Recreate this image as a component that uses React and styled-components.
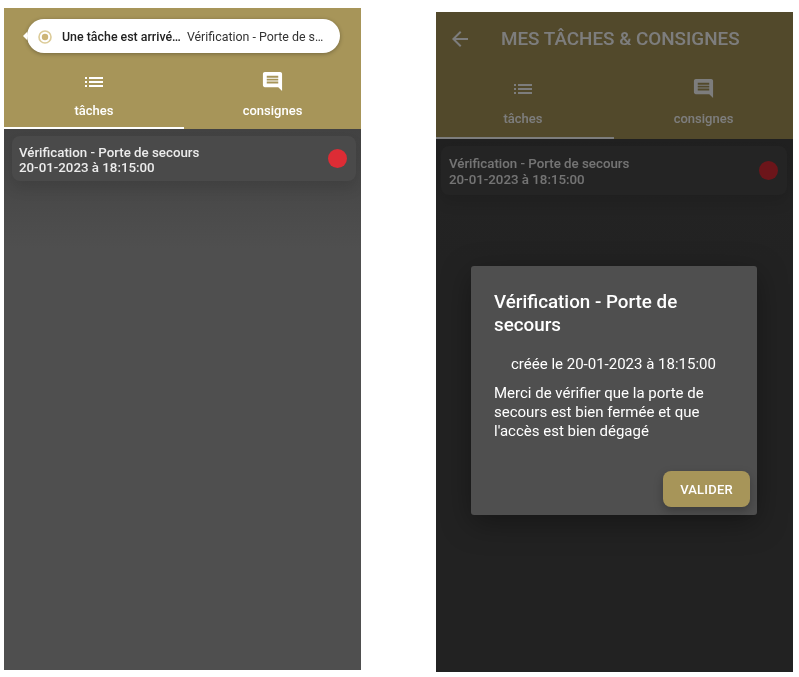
import React from "react";
import styled, { createGlobalStyle } from "styled-components";
import { MdArrowBack, MdList, MdMessage } from "react-icons/md";

const Global = createGlobalStyle`
  html, body { margin: 0; padding: 0; background: #fff; }
  body { font-family: Roboto, "Liberation Sans", sans-serif; width: 799px; height: 677px; overflow: hidden; }
`;

const Page = styled.div`
  display: flex;
  align-items: flex-start;
  gap: 75px;
  padding-left: 4px;
`;

const Phone = styled.section`
  position: relative;
  width: 357px;
  height: ${(p) => p.$h}px;
  margin-top: ${(p) => p.$top}px;
  display: flex;
  flex-direction: column;
  background: #4f4f4f;
  overflow: hidden;
  filter: blur(0.4px);
`;

const Header = styled.header`
  background: #a79559;
  padding-top: ${(p) => p.$pad}px;
  flex: none;
`;

const Toolbar = styled.div`
  height: 48px;
  display: flex;
  align-items: center;
  padding-left: 12px;
  gap: 29px;
  color: #fff;
  font-size: 24px;
`;

const Title = styled.h1`
  margin: 0;
  font-size: 18.85px;
  font-weight: 500;
`;

const Tabs = styled.nav`
  display: grid;
  grid-template-columns: ${(p) => p.$first}px 1fr;
`;

const Tab = styled.div`
  height: ${(p) => p.$h}px;
  padding-top: ${(p) => p.$top}px;
  padding-right: ${(p) => p.$nudge || 0}px;
  display: flex;
  flex-direction: column;
  align-items: center;
  color: #fff;
  font-size: 13px;
  font-weight: 500;
  border-bottom: 2px solid ${(p) => (p.$active ? "#fff" : "transparent")};
  box-sizing: border-box;
`;

const TabIcon = styled.span`
  height: 26px;
  display: flex;
  align-items: center;
  justify-content: center;
  margin-bottom: ${(p) => p.$gap}px;
  font-size: ${(p) => p.$size}px;
  transform: ${(p) => (p.$mirror ? "translateY(-1px) scaleX(-1)" : "none")};
`;

const Content = styled.main`
  flex: 1;
  padding: ${(p) => p.$card.top}px ${(p) => p.$card.right}px 0 ${(p) => p.$card.left}px;
  background: linear-gradient(#424242 0, #484848 60px, ${(p) => p.$base} 120px);
`;

const TaskCard = styled.article`
  height: ${(p) => p.$card.h}px;
  border-radius: 8px;
  background: #4a4a4a;
  box-shadow: 0 8px 14px rgba(0, 0, 0, 0.1);
  display: flex;
  align-items: center;
  justify-content: space-between;
  padding: 0 9px 0 ${(p) => p.$card.text}px;
  color: #ececec;
  font-size: 13.3px;
  font-weight: 500;
  line-height: ${(p) => p.$card.line}px;
`;

const TaskText = styled.div`
  padding-top: 2px;
`;

const StatusDot = styled.span`
  width: 19px;
  height: 19px;
  border-radius: 50%;
  background: #dd2c35;
`;

const Toast = styled.div`
  position: absolute;
  left: 23px;
  top: 11px;
  width: 313px;
  height: 34px;
  box-sizing: border-box;
  padding: 1px 0 0 11px;
  border-radius: 17px;
  background: #fff;
  box-shadow: 0 1px 4px rgba(0, 0, 0, 0.3);
  display: flex;
  align-items: center;
  font-size: 12.4px;
  color: #333;
  white-space: nowrap;
`;

const ToastNotch = styled.span`
  position: absolute;
  left: -4px;
  top: 13px;
  width: 0;
  height: 0;
  border-top: 4px solid transparent;
  border-bottom: 4px solid transparent;
  border-right: 4px solid #fff;
`;

const ToastLogo = styled.svg`
  width: 14px;
  height: 14px;
  margin-right: 10px;
  flex: none;
`;

const ToastTitle = styled.strong`
  font-weight: 500;
  color: #222;
  margin-right: 6px;
`;

const Scrim = styled.div`
  position: absolute;
  inset: 0;
  background: rgba(0, 0, 0, 0.51);
`;

const Dialog = styled.div`
  position: absolute;
  left: 35px;
  top: 254px;
  width: 286px;
  height: 249px;
  box-sizing: border-box;
  padding: 25px 23px 0;
  border-radius: 3px;
  background: #4f4f4f;
  color: #fff;
  box-shadow: 0 8px 30px rgba(0, 0, 0, 0.35);
`;

const DialogTitle = styled.h2`
  margin: 0 0 18px;
  font-size: 18.8px;
  font-weight: 500;
  line-height: 23px;
`;

const DialogDate = styled.p`
  margin: 0 0 10px 17px;
  font-size: 15px;
  line-height: 19px;
`;

const DialogText = styled.p`
  margin: 0;
  font-size: 15px;
  line-height: 19px;
`;

const ValidateButton = styled.button`
  position: absolute;
  right: 7px;
  bottom: 8px;
  width: 87px;
  height: 36px;
  border: 0;
  border-radius: 8px;
  background: #a79559;
  color: #fff;
  font: 500 13px Roboto, sans-serif;
  letter-spacing: 0.2px;
  box-shadow: 0 4px 10px rgba(0, 0, 0, 0.25);
`;

function TabBar({ first, h, top, nudge, gap }) {
  return (
    <Tabs $first={first}>
      <Tab $active $h={h} $top={top} $nudge={nudge}>
        <TabIcon $size={24} $gap={gap}><MdList /></TabIcon>
        tâches
      </Tab>
      <Tab $h={h} $top={top}>
        <TabIcon $size={23} $gap={gap} $mirror><MdMessage /></TabIcon>
        consignes
      </Tab>
    </Tabs>
  );
}

function Task({ card, base }) {
  return (
    <Content $card={card} $base={base}>
      <TaskCard $card={card}>
        <TaskText>
          Vérification - Porte de secours
          <br />
          20-01-2023 à 18:15:00
        </TaskText>
        <StatusDot />
      </TaskCard>
    </Content>
  );
}

const leftCard = { top: 7, left: 8, right: 5, h: 45, text: 7, line: 15 };
const rightCard = { top: 7, left: 5, right: 6, h: 49, text: 8, line: 16 };

export default function App() {
  return (
    <>
      <Global />
      <Page>
        <Phone $h={662} $top={8}>
          <Header $pad={61}>
            <TabBar first={180} h={60} top={0} gap={8} />
          </Header>
          <Task card={leftCard} base="#4f4f4f" />
          <Toast>
            <ToastNotch />
            <ToastLogo viewBox="0 0 14 14">
              <circle cx="7" cy="7" r="6" fill="none" stroke="#dccb98" strokeWidth="1.6" />
              <circle cx="7" cy="7" r="3.2" fill="#cdb577" />
            </ToastLogo>
            <ToastTitle>Une tâche est arrivé…</ToastTitle>
            Vérification - Porte de s…
          </Toast>
        </Phone>
        <Phone $h={660} $top={12}>
          <Header $pad={3}>
            <Toolbar>
              <MdArrowBack />
              <Title>MES TÂCHES &amp; CONSIGNES</Title>
            </Toolbar>
            <TabBar first={178} h={76} top={13} nudge={4} gap={9} />
          </Header>
          <Task card={rightCard} base="#474747" />
          <Scrim />
          <Dialog>
            <DialogTitle>Vérification - Porte de secours</DialogTitle>
            <DialogDate>créée le 20-01-2023 à 18:15:00</DialogDate>
            <DialogText>
              Merci de vérifier que la porte de secours est bien fermée et que l'accès est bien dégagé
            </DialogText>
            <ValidateButton>VALIDER</ValidateButton>
          </Dialog>
        </Phone>
      </Page>
    </>
  );
}
